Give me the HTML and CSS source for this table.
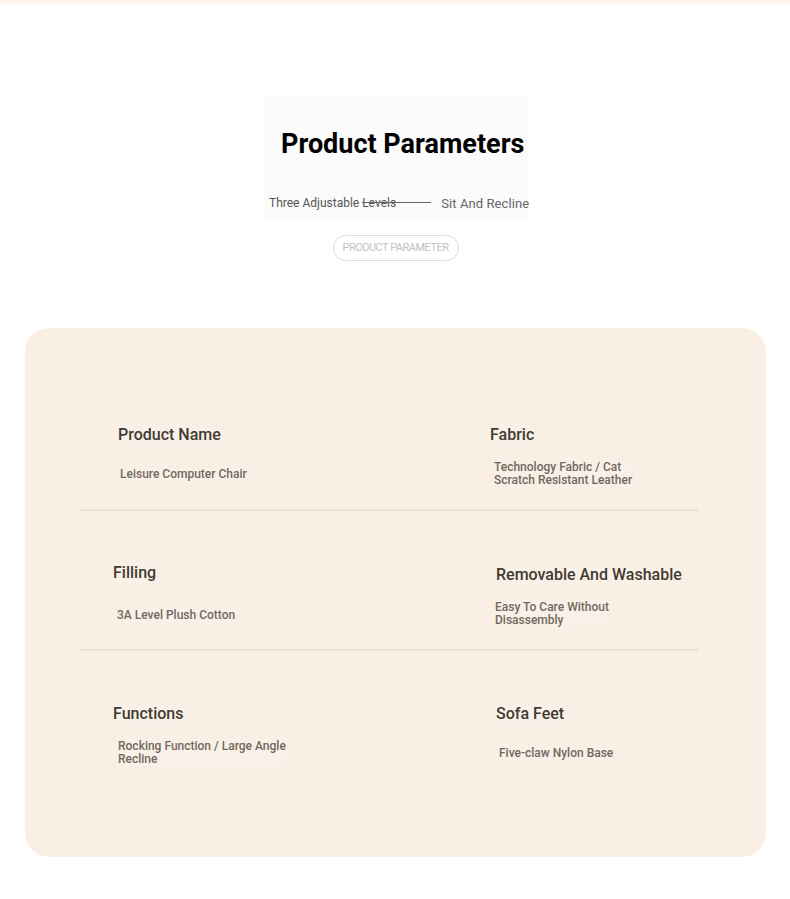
FILE: index.html
```html
<!DOCTYPE html>
<html lang="en">
<head>
<meta charset="utf-8">
<title>Product Parameters</title>
<link rel="stylesheet" href="styles.css">
</head>
<body>
<div class="topfade"></div>
<section class="intro">
  <div class="intro-box">
    <h1 class="title">Product Parameters</h1>
    <div class="sub">
      <span class="sub-left">Three Adjustable Levels</span>
      <span class="sub-line"></span>
      <span class="sub-right">Sit And Recline</span>
    </div>
  </div>
  <div class="pill">PRODUCT PARAMETER</div>
</section>

<section class="card">
  <div class="row row-1">
    <div class="cell cell-l1">
      <div class="name">Product Name</div>
      <div class="desc desc-l1">Leisure Computer Chair</div>
    </div>
    <div class="cell cell-r1">
      <div class="name">Fabric</div>
      <div class="desc desc-r1">Technology Fabric / Cat<br>Scratch Resistant Leather</div>
    </div>
  </div>
  <div class="row row-2">
    <div class="cell cell-l2">
      <div class="name">Filling</div>
      <div class="desc desc-l2">3A Level Plush Cotton</div>
    </div>
    <div class="cell cell-r2">
      <div class="name">Removable And Washable</div>
      <div class="desc desc-r2">Easy To Care Without<br>Disassembly</div>
    </div>
  </div>
  <div class="row row-3">
    <div class="cell cell-l3">
      <div class="name">Functions</div>
      <div class="desc desc-l3">Rocking Function / Large Angle<br>Recline</div>
    </div>
    <div class="cell cell-r3">
      <div class="name">Sofa Feet</div>
      <div class="desc desc-r3">Five-claw Nylon Base</div>
    </div>
  </div>
</section>
</body>
</html>
```
FILE: styles.css
```css
html, body {
  margin: 0;
  padding: 0;
  background: #ffffff;
  font-family: Roboto, "Liberation Sans", Arial, sans-serif;
}

.topfade {
  height: 6px;
  background: linear-gradient(#fcf3e8, #ffffff);
}

.intro {
  display: flex;
  flex-direction: column;
  align-items: center;
  padding-top: 89px;
}

.intro-box {
  width: 265px;
  background: #fbfbfb;
  padding: 33px 0 9px;
  box-sizing: border-box;
  margin-left: 1px;
}

.title {
  margin: 0;
  padding-left: 18px;
  font-size: 27px;
  line-height: 32px;
  font-weight: 700;
  color: #000000;
  white-space: nowrap;
}

.sub {
  display: flex;
  align-items: center;
  margin-top: 36px;
  padding-left: 6px;
  height: 16px;
  white-space: nowrap;
}

.sub-left {
  flex-shrink: 0;
  font-size: 12px;
  color: #555555;
  line-height: 14px;
  margin-top: -2px;
}

.sub-line {
  flex-shrink: 0;
  width: 69px;
  height: 1px;
  background: #666666;
  margin-left: -34px;
  margin-top: -4px;
}

.sub-right {
  flex-shrink: 0;
  font-size: 13px;
  color: #666666;
  margin-left: 10px;
  line-height: 16px;
  letter-spacing: 0.1px;
}

.pill {
  margin-top: 14px;
  width: 126px;
  height: 26px;
  box-sizing: border-box;
  border: 1px solid #dddddd;
  border-radius: 13px;
  font-size: 11px;
  line-height: 24px;
  color: #c2c2c2;
  text-align: center;
  letter-spacing: -0.5px;
  margin-left: 1px;
  white-space: nowrap;
}

.card {
  margin: 67px 24px 42px 25px;
  background: #f9efe4;
  border-radius: 24px;
  padding: 43px 68px 0 54px;
  height: 529px;
  box-sizing: border-box;
}

.row {
  display: grid;
  grid-template-columns: 405px 1fr;
  box-sizing: border-box;
  border-bottom: 2px solid #e8dfd5;
}

.row-1 { height: 140px; }
.row-2 { height: 140px; }
.row-3 { height: 206px; border-bottom: none; }

.cell {
  display: flex;
  flex-direction: column;
  align-items: flex-start;
}

.name {
  font-size: 16px;
  line-height: 20px;
  font-weight: 500;
  color: #433a33;
  background: rgba(255, 255, 255, 0.12);
  white-space: nowrap;
}

.desc {
  font-size: 12px;
  line-height: 13px;
  font-weight: 500;
  color: #716860;
  background: rgba(255, 255, 255, 0.12);
  white-space: nowrap;
}

.cell-l1 { padding: 54px 0 0 39px; }
.desc-l1 { margin: 23px 0 0 2px; }
.cell-r1 { padding: 54px 0 0 6px; }
.desc-r1 { margin: 16px 0 0 4px; }

.cell-l2 { padding: 52px 0 0 34px; }
.desc-l2 { margin: 26px 0 0 4px; }
.cell-r2 { padding: 54px 0 0 12px; }
.desc-r2 { margin: 16px 0 0 -1px; }

.cell-l3 { padding: 53px 0 0 34px; }
.desc-l3 { margin: 16px 0 0 5px; }
.cell-r3 { padding: 53px 0 0 12px; }
.desc-r3 { margin: 23px 0 0 3px; }
```
